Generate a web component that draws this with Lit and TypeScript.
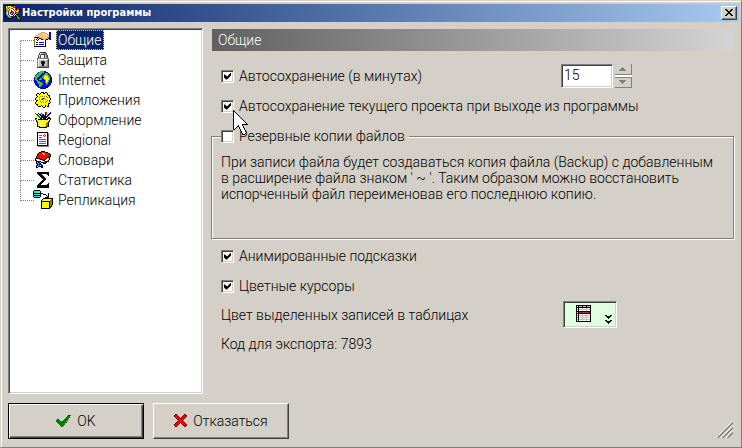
import { LitElement, html, css, svg } from "lit";
import { customElement, property, state } from "lit/decorators.js";

const INK: Record<string, string> = {
  k: "#000000", w: "#ffffff", y: "#ffff00", o: "#808000", b: "#0000ff",
  n: "#000080", r: "#ff0000", m: "#800000", g: "#00ff00", d: "#008000",
  c: "#00ffff", s: "#808080", l: "#c0c0c0", t: "#ffcc88", h: "#404040",
  p: "#5050ff", q: "#d8a060", e: "#33cc00",
};

const SPRITES: Record<string, string[]> = {
  app: [
    "kkkkkkkkkkk.....",
    "kyryyyrrrgk.bb..",
    "kygcryyyrrk.bbk.",
    "kgcryyrryyrkrrk.",
    "kyryrwwwryrkrrkk",
    "krygrwbwwryryykk",
    "kryrwwbrwwryyrk.",
    "kcyrwbrrbwrrgrk.",
    "kgyrwbyrrwkggk..",
    "kgcrwwbbwkwkk...",
    "kbgcrwwwkwkgk...",
    "kbbgcrrkrkkkgk..",
    "kbrbggkk...kggk.",
    "kkkkkk......kgk.",
    ".............kgk",
    "..............kk",
  ],
  general: [
    ".......qqqq....bb",
    ".....qqttttqq..bb",
    "....qttqtttttqtbb",
    "..qqttqttttttttbb",
    ".qtttqttttttttqbb",
    "okkkkttqqttttqqbb",
    "owwkwkkqtqttqqknn",
    "owkwkwwkkqqqkk.nn",
    "owwkwwwwwwwk.....",
    "owwwwwwwwwwk.....",
    "owbbwbbbbbwk.....",
    "owwwwwwwwwwk.....",
    "owbbwbbbbbwk.....",
    "owwwwwwwwwwk.....",
    "kkkkkkkkkkkk.....",
  ],
  lock: [
    "...hhhhhh...",
    "..hwllsssh..",
    "..hlhhhhsh..",
    ".hwh...hlsh.",
    ".hlh...hlsh.",
    ".hlh...hlsh.",
    "ssssssssssss",
    "swwwwwwwwwlh",
    "swllllllllsh",
    "swllhkkhllsh",
    "swllkkkkllsh",
    "swllhkkhllsh",
    "swlllkklllsh",
    "swlllkklllsh",
    "slsssssssssh",
    "hhhhhhhhhhhh",
  ],
  globe: [
    "......eeeebb......",
    "....beeeeebbbb....",
    "...beeeebbbeeen...",
    "..beeeebbbeeeebn..",
    ".bgeeebbbeeyyeebn.",
    ".geeebbbeeyyyyeen.",
    "bgeebbbbeeyyyyeebn",
    "beebbbeebeyyyyyebn",
    "beebbeeebbeyyyyebn",
    "bbeebbbbbbbeyyebbn",
    "bbbeeebbbbbeyyebbn",
    "bbbeeeeebbbeyebbbn",
    ".bbbeeeeebbbeebbn.",
    ".bbbbeeeebbbebbbn.",
    "..bbbeeebbbbbbbn..",
    "...bbeebbbbbbnn...",
    "....bbbbbbbbnn....",
    "......bnnnnn......",
  ],
  gear: [
    "......kkk.kk....",
    "..kk.kyykkyyk...",
    ".kyykyyyyyyyk...",
    ".kyyyyyyyyyyykk.",
    "..kyyoyoyoyoyyk.",
    ".kyyoyyyyyyyoyk.",
    "kyyyyyyokoyyyyyk",
    "kyyyoyokyyoyyyyk",
    ".kkyyyyyoyyyoyk.",
    ".kyyyoyyyyyoyyk.",
    "kyyyyyoyoyoyyyyk",
    "kyyyyyyyyyyyykk.",
    ".kkyyyyyyyyyyk..",
    "..kyyykyyykyyk..",
    "...kkk.kyyk.kk..",
    "........kk......",
  ],
  paint: [
    "..........rr...b",
    "d..k..b...rr..bb",
    ".dd.kk.bb.kr.bk.",
    "y.dd.kkbbdk.bk..",
    ".yydd.kkbkkbk...",
    "..yyddkkkkkk.kk.",
    "kk.yykkykkk.kkkk",
    "kyykkkkkkkkkkyyk",
    ".kyyyyyyyyyyyyk.",
    ".koyyyyyyyyyyok.",
    "..kyywyyyyyyok..",
    "..kyywyyyyyook..",
    "..kyywyyyyyook..",
    "..kyyyyyyyyook..",
    "..kkoyyyyyookk..",
    "....kkkkkkkk....",
  ],
  regional: [
    "kkkkkkkkkkk.",
    "kwwwwwwwwwks",
    "kwwwwwwrwwks",
    "kwpppwryrwks",
    "kwwwwwwrwwks",
    "kwpppwwwwwks",
    "kwwwwwwwwwks",
    "kwpppppppwks",
    "kwwwwwwwwwks",
    "kwpppppppwks",
    "kwwwwwwwwwks",
    "kwpppppppwks",
    "kwwwwwwwwwks",
    "kkkkkkkkkkks",
    ".sssssssssss",
  ],
  words: [
    "......kkkk......",
    "....kkrrrrkkk...",
    "...krrryyrrrrkk.",
    "..krrrrryyrrrrrk",
    "..krrrrrrrrrrrrk",
    ".krrrrrrrrrrrkmk",
    ".krrrrrrrrrrkmk.",
    "kmkkkrrrrrrkwlk.",
    "kwwwskkkrrkwwlk.",
    "kmwwwwwskkwwlk..",
    ".kbkbkwwwskkmk..",
    ".kcbbckkmmmk....",
    ".kbcbk..kkk.....",
    "..kbbbk.........",
    ".kbcbcbk........",
    ".kcbkkbk........",
    ".kk...kk........",
  ],
  sigma: [
    "kkkkkkkkkkkk",
    "kkkkkkkkkkkk",
    ".kkkk.....kk",
    "..kkkk.....k",
    "...kkkk.....",
    "....kkkk....",
    ".....kkkk...",
    "......kkk...",
    ".....kkk....",
    "....kkk.....",
    "...kkk......",
    "..kkk......k",
    ".kkk......kk",
    "kkkkkkkkkkkk",
    "kkkkkkkkkkkk",
    "kkkkkkkkkkkk",
  ],
  replica: [
    ".kkkkkk.............",
    "kcccccck............",
    "kcccccck............",
    "kkkkkkkkkk.....k....",
    "kcccccck..kkk..k....",
    "kkkkkkkk.....k.k....",
    "kcccccck......kk....",
    ".kkkkkk.....kkkk....",
    "..........kkkkkkkkkk",
    ".........kyyyyyyyyok",
    "........kyyyyyyyyook",
    "........kkkkkkkkkook",
    "........kyyyyyyykook",
    "........kyyyyyyykook",
    "........kyyyyyyykook",
    "........kyyyyyyykok.",
    "........kyyyyyyykok.",
    "........kyyyyyyykk..",
    "........kkkkkkkkk...",
  ],
  tick: [
    "............kdd",
    "...........ddd.",
    "..........dddd.",
    ".........dddd..",
    ".kd.....dddd...",
    "dddd...ddddk...",
    "dddddddddd.....",
    ".dddddddddk....",
    "..ddddddd......",
    "...dddddd......",
    "....dddd.......",
    ".....dd........",
  ],
  cross: [
    ".mm.......mm.",
    "mrrm.....mrrm",
    "mrrrm...mrrrm",
    ".mrrrm.mrrrm.",
    "..mrrrmrrrm..",
    "...mrrrrrm...",
    "....mrrrm....",
    "...mrrrrrm...",
    "..mrrrmrrrm..",
    ".mrrrm.mrrrm.",
    "mrrrm...mrrrm",
    "mrrm.....mrrm",
    ".mm.......mm.",
  ],
  table: [
    "kkkkkkkkkkkkkkk",
    "kwklllklllklllk",
    "kkkkkkkkkkkkkkk",
    "kwkwwwlwwwlwwwk",
    "klklllllllllllk",
    "kwkwwwlwwwlwwwk",
    "kkkkkkkkkkkkkkk",
    "kwkrrrrrrrrrrrk",
    "kkkkkkkkkkkkkkk",
    "kwkwwwlwwwlwwwk",
    "klklllllllllllk",
    "kwkwwwlwwwlwwwk",
    "klklllllllllllk",
    "kwkwwwlwwwlwwwk",
    "klklllllllllllk",
    "kwkwwwlwwwlwwwk",
    "kkkkkkkkkkkkkkk",
  ],
  more: [
    "kk...kk",
    ".kkkkk.",
    "..kkk..",
    "...k...",
    ".......",
    "kk...kk",
    ".kkkkk.",
    "..kkk..",
    "...k...",
  ],
  close: [
    "kk....kk",
    ".kk..kk.",
    "..kkkk..",
    "...kk...",
    "..kkkk..",
    ".kk..kk.",
    "kk....kk",
  ],
  up: ["...s...", "..sss..", ".sssss.", "sssssss"],
  down: ["sssssss", ".sssss.", "..sss..", "...s..."],
  pointer: [
    "k..............",
    "kk.............",
    "kwk............",
    "kwwk...........",
    "kwwwk..........",
    "kwwwwk.........",
    "kwwwwwk........",
    "kwwwwwwk.......",
    "kwwwwwwwk......",
    "kwwwwwwwwk.....",
    "kwwwwwwwwwk....",
    "kwwwwwwwwwwk...",
    "kwwwwwwwwwwwk..",
    "kwwwwwwwwwwwwk.",
    "kwwwwwwwwkkkkkk",
    "kwwwwkwwwk.....",
    "kwwwkkwwwwk....",
    "kwwk..kwwwk....",
    "kwk...kwwwwk...",
    "kk.....kwwwk...",
    ".......kwwwwk..",
    "........kwwwk..",
    "........kwwwwk.",
    ".........kwwk..",
    ".........kkk...",
  ],
};

/**
 * Draws a named sprite, one path for each ink. The canvas is rounded up to
 * even sides so that it centres on whole pixels.
 */
function sprite(name: string) {
  const rows = SPRITES[name];
  const even = (n: number) => n + (n % 2);
  const width = even(Math.max(...rows.map((r) => r.length)));
  const height = even(rows.length);
  const inks = new Map<string, string>();
  rows.forEach((row, y) => {
    for (const m of row.matchAll(/([a-z])\1*/g)) {
      const run = `M${m.index} ${y}h${m[0].length}v1h-${m[0].length}z`;
      inks.set(m[1], (inks.get(m[1]) ?? "") + run);
    }
  });
  return html`<svg width=${width} height=${height} viewBox="0 0 ${width} ${height}" aria-hidden="true">
    ${[...inks].map(([ink, d]) => svg`<path d=${d} fill=${INK[ink]}></path>`)}
  </svg>`;
}

@customElement("check-option")
class CheckOption extends LitElement {
  @property() label = "";
  @property({ type: Boolean }) checked = false;

  static styles = css`
    :host { display: inline-flex; }
    .option { display: flex; align-items: center; gap: 5px; white-space: nowrap; line-height: 21px; }
    .box {
      appearance: none; margin: 0; width: 13px; height: 13px; flex: none; background: #fff;
      border: 1px solid; border-color: #808080 #fff #fff #808080;
      box-shadow: inset 1px 1px #404040, inset -1px -1px #d4d0c8;
    }
    .box:checked::before {
      content: ""; display: block; width: 7px; height: 7px; margin: 2px; background: #000;
      clip-path: polygon(0 2px, 1px 2px, 3px 4px, 7px 0, 7px 3px, 3px 7px, 2px 7px, 0 5px);
    }
  `;

  render() {
    return html`<label class="option">
      <input class="box" type="checkbox" .checked=${this.checked} />${this.label}
    </label>`;
  }
}

@customElement("app-root")
class AppRoot extends LitElement {
  @state() private section = "Общие";

  private sections = [
    ["general", "Общие"],
    ["lock", "Защита"],
    ["globe", "Internet"],
    ["gear", "Приложения"],
    ["paint", "Оформление"],
    ["regional", "Regional"],
    ["words", "Словари"],
    ["sigma", "Статистика"],
    ["replica", "Репликация"],
  ];

  static styles = css`
    :host { display: block; font: 300 14px/16px Roboto, "Liberation Sans", sans-serif; color: #000; }
    * { box-sizing: border-box; }
    svg { display: block; flex: none; }
    button, input { font: inherit; color: inherit; border-radius: 0; }
    button { padding: 0; }
    .window {
      min-height: 100vh; display: flex; flex-direction: column; padding: 3px 2px 0;
      background: #d4d0c8; border: 1px solid; border-color: #d4d0c8 #808080 #808080 #d4d0c8;
      box-shadow: inset 1px 1px #fff;
    }
    .titlebar {
      height: 18px; display: flex; align-items: center; gap: 1px; padding: 0 2px;
      background: linear-gradient(90deg, #0a246a, #a6caf0);
    }
    .title { flex: 1; margin: 0; color: #fff; font: bold 11px/18px "DejaVu Sans Condensed", "DejaVu Sans", sans-serif; }
    .close {
      width: 16px; height: 14px; display: grid; place-items: center; background: #d4d0c8;
      border: 1px solid; border-color: #fff #404040 #404040 #fff; box-shadow: inset -1px -1px #808080;
    }
    .body { flex: 1; display: grid; grid-template-columns: 195px 1fr; gap: 8px; padding: 6px 5px 0; }
    .tree {
      margin: 0; padding: 1px 0 0 10px; list-style: none; background: #fff;
      border: 1px solid; border-color: #808080 #fff #fff #808080;
      box-shadow: inset 1px 1px #404040, inset -1px -1px #d4d0c8;
    }
    .node { display: flex; align-items: center; height: 20px; }
    .branch { align-self: stretch; width: 14px; margin-left: 1px; display: flex; flex-direction: column; }
    .branch::before, .branch::after { content: ""; flex: 1; }
    .branch::before { border-left: 1px dotted #808080; border-bottom: 1px dotted #808080; }
    .branch::after { border-left: 1px dotted #808080; }
    .node:first-child .branch::before { border-left-color: transparent; }
    .node:last-child .branch::after { border-left-color: transparent; }
    .icon { width: 18px; height: 20px; margin-right: 4px; display: flex; justify-content: center; align-items: center; }
    .item { height: 20px; padding: 0 2px 0 1px; border: 1px dotted transparent; background: none; line-height: 18px; }
    .item.selected { background: #0a246a; color: #fff; border-color: #f0c860; }
    .panel { display: flex; flex-direction: column; }
    .heading {
      margin: 1px 1px 10px; padding-left: 6px; font-size: 14px; line-height: 22px; font-weight: inherit;
      color: #fff; background: linear-gradient(90deg, #606060, #d4d4d4);
    }
    .row { position: relative; display: grid; grid-template-columns: 1fr 173px; align-items: center; height: 30px; padding-left: 10px; }
    .single { grid-template-columns: 1fr; }
    .short { height: 28px; }
    .stepper { display: flex; gap: 2px; }
    .minutes {
      width: 52px; height: 24px; padding: 0 0 2px 2px; background: #fff; outline: none;
      border: 1px solid; border-color: #808080 #fff #fff #808080;
      box-shadow: inset 1px 1px #404040, inset -1px -1px #d4d0c8;
    }
    .arrows { display: grid; gap: 2px; width: 17px; height: 24px; background: linear-gradient(#fff, #fff) center / 100% 4px no-repeat; }
    .arrow { display: grid; place-items: center; background: #d4d0c8; border: 0 solid #808080; border-width: 0 1px 1px 0; }
    .arrow.lower { border-top-width: 1px; }
    .pointer { position: absolute; left: 22px; top: 19px; z-index: 1; }
    .group {
      min-width: 0; min-height: 113px; margin: 5px 0 2px; padding: 7px 9px 0; border: 1px solid #808080;
      box-shadow: inset 1px 1px #fff, 1px 1px #fff;
    }
    .legend { padding: 0 4px 0 0; background: #d4d0c8; }
    .note { margin: 0; }
    .swatch {
      place-self: start; margin-left: 2px; width: 54px; height: 27px; display: flex; align-items: flex-start;
      justify-content: space-between; padding: 3px 3px 2px 12px; background: #e0ffe0;
      border: 1px solid; border-color: #808080 #fff #fff #808080;
      box-shadow: inset 1px 1px #404040, inset -1px -1px #d4d0c8;
    }
    .more { align-self: flex-end; }
    .footer { display: flex; gap: 9px; padding: 9px 5px 8px; }
    .push {
      width: 136px; height: 36px; display: flex; align-items: center; justify-content: center; gap: 5px;
      background: #d4d0c8; border: 1px solid; border-color: #fff #404040 #404040 #fff;
      box-shadow: inset -1px -1px #808080;
    }
    .push.default { border-color: #000; box-shadow: inset 1px 1px #fff, inset -1px -1px #404040, inset -2px -2px #808080; }
    .grip { margin-left: auto; align-self: flex-end; }
  `;

  render() {
    return html`<div class="window">
      <header class="titlebar">
        ${sprite("app")}
        <h1 class="title">Настройки программы</h1>
        <button class="close" aria-label="Закрыть">${sprite("close")}</button>
      </header>
      <main class="body">
        <ul class="tree">
          ${this.sections.map(([icon, name]) => html`<li class="node">
            <span class="branch"></span>
            <span class="icon">${sprite(icon)}</span>
            <button class="item ${name === this.section ? "selected" : ""}"
              @click=${() => (this.section = name)}>${name}</button>
          </li>`)}
        </ul>
        <section class="panel">
          <h2 class="heading">${this.section}</h2>
          <div class="row">
            <check-option label="Автосохранение (в минутах)" checked></check-option>
            <div class="stepper">
              <input class="minutes" type="text" value="15" aria-label="Минуты" />
              <div class="arrows">
                <button class="arrow" aria-label="Больше">${sprite("up")}</button>
                <button class="arrow lower" aria-label="Меньше">${sprite("down")}</button>
              </div>
            </div>
          </div>
          <div class="row single">
            <check-option label="Автосохранение текущего проекта при выходе из программы" checked></check-option>
            <span class="pointer">${sprite("pointer")}</span>
          </div>
          <fieldset class="group">
            <legend class="legend"><check-option label="Резервные копии файлов"></check-option></legend>
            <p class="note">При записи файла будет создаваться копия файла (Backup) с добавленным
              в расширение файла знаком ' ~ '. Таким образом можно восстановить
              испорченный файл переименовав его последнюю копию.</p>
          </fieldset>
          <div class="row single"><check-option label="Анимированные подсказки" checked></check-option></div>
          <div class="row single"><check-option label="Цветные курсоры" checked></check-option></div>
          <div class="row short">
            <span>Цвет выделенных записей в таблицах</span>
            <button class="swatch" aria-haspopup="listbox" aria-label="Цвет выделенных записей в таблицах">
              ${sprite("table")}<span class="more">${sprite("more")}</span>
            </button>
          </div>
          <div class="row single"><span>Код для экспорта: 7893</span></div>
        </section>
      </main>
      <footer class="footer">
        <button class="push default">${sprite("tick")}OK</button>
        <button class="push">${sprite("cross")}Отказаться</button>
        <svg class="grip" width="18" height="18" viewBox="0 0 18 18" aria-hidden="true">
          <path d="M0 17L17 0M5 17L17 5M10 17L17 10" stroke="#fff" fill="none"></path>
          <path d="M1 17L17 1M2 17L17 2M6 17L17 6M7 17L17 7M11 17L17 11M12 17L17 12" stroke="#808080" fill="none"></path>
        </svg>
      </footer>
    </div>`;
  }
}
